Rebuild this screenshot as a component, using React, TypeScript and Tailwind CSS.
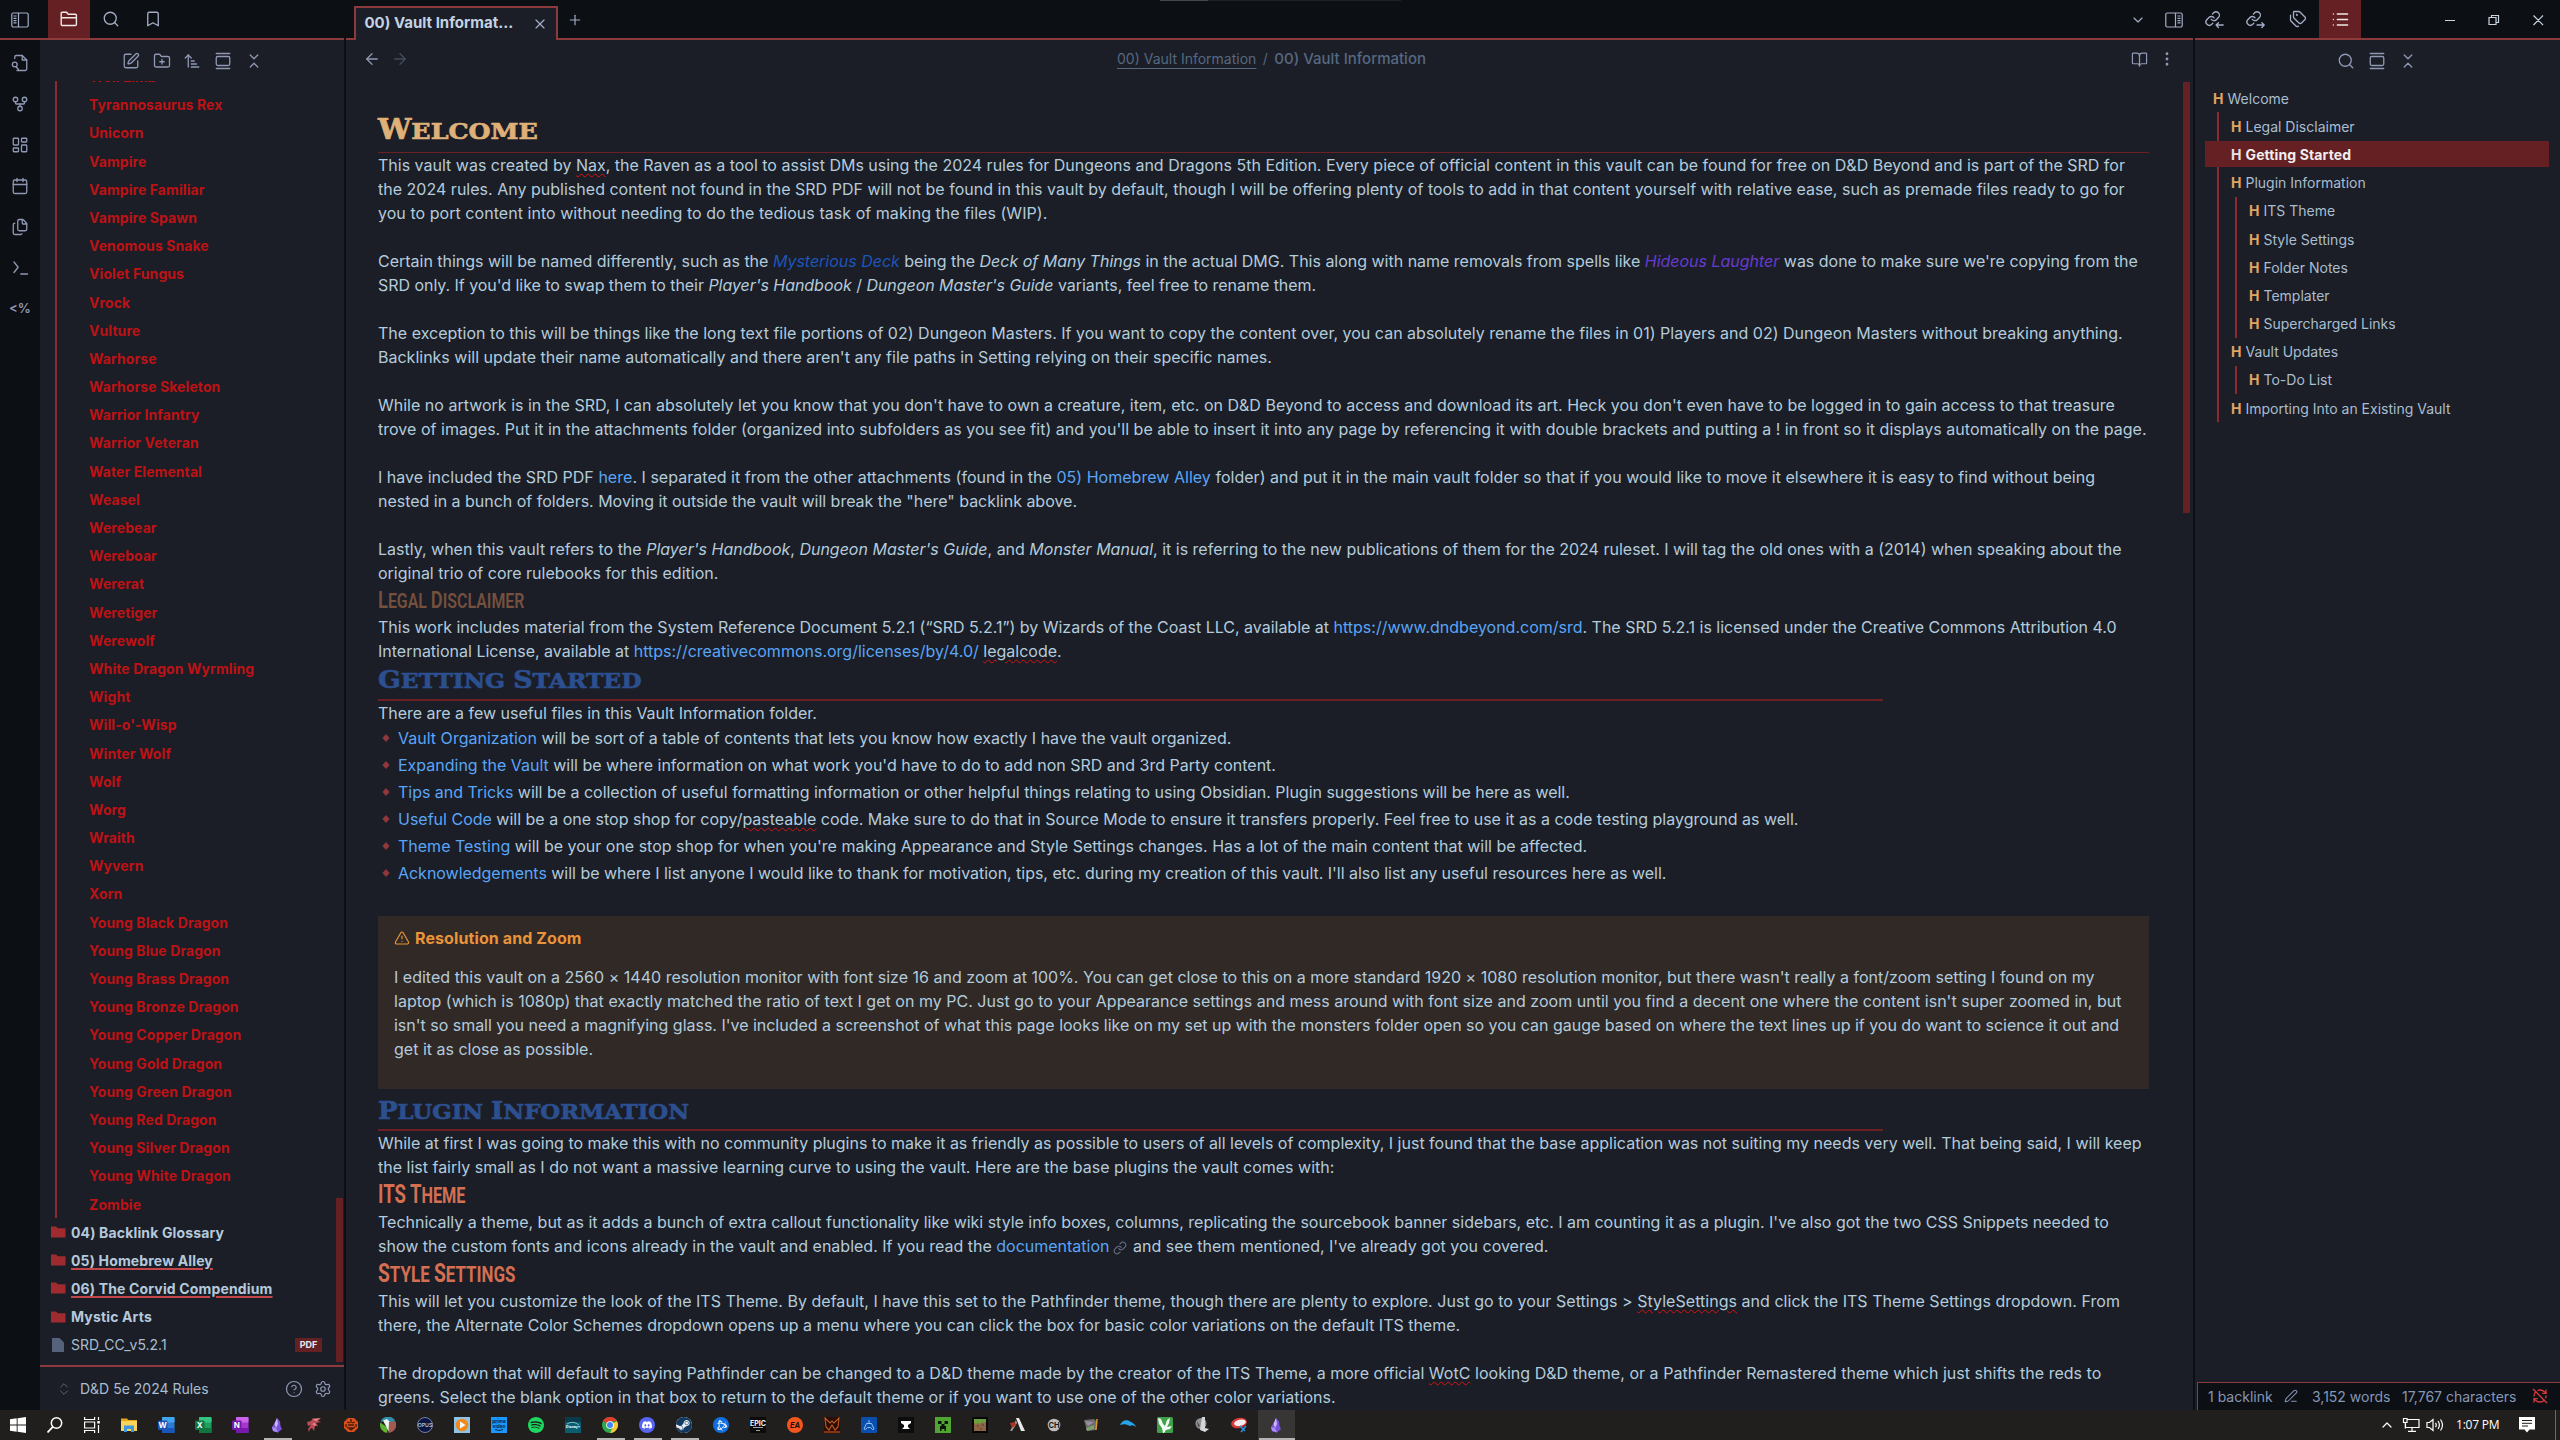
import React from "react";
import {
  ArrowLeft, ArrowRight, ArrowUpNarrowWide, Bookmark, BookOpen, Calendar, ChevronDown, ChevronUp,
  ChevronsDownUp, ChevronsUpDown, CircleHelp, EllipsisVertical, Files, FolderPlus, GalleryVertical,
  GitFork, LayoutDashboard, Link, List, PenLine, Plus, RefreshCwOff, Search, Settings, SquarePen,
  Tags, TriangleAlert, X,
} from "lucide-react";
import { SiBattledotnet, SiDiscord, SiEa, SiEpicgames, SiSpotify, SiSteam } from "react-icons/si";

const SW = 1.75;

const monsters = [
  "Troll Limb", "Tyrannosaurus Rex", "Unicorn", "Vampire", "Vampire Familiar", "Vampire Spawn",
  "Venomous Snake", "Violet Fungus", "Vrock", "Vulture", "Warhorse", "Warhorse Skeleton",
  "Warrior Infantry", "Warrior Veteran", "Water Elemental", "Weasel", "Werebear", "Wereboar",
  "Wererat", "Weretiger", "Werewolf", "White Dragon Wyrmling", "Wight", "Will-o'-Wisp",
  "Winter Wolf", "Wolf", "Worg", "Wraith", "Wyvern", "Xorn", "Young Black Dragon",
  "Young Blue Dragon", "Young Brass Dragon", "Young Bronze Dragon", "Young Copper Dragon",
  "Young Gold Dragon", "Young Green Dragon", "Young Red Dragon", "Young Silver Dragon",
  "Young White Dragon", "Zombie",
];

const folders = [
  { name: "04) Backlink Glossary", underline: false },
  { name: "05) Homebrew Alley", underline: true },
  { name: "06) The Corvid Compendium", underline: true },
  { name: "Mystic Arts", underline: false },
];

/* ---------- small drawings ---------- */

function PanelIcon({ right = false }: { right?: boolean }) {
  return (
    <svg width="18" height="16" viewBox="0 0 18 16" fill="none" stroke="currentColor" strokeWidth="1.2" className={right ? "-scale-x-100" : ""}>
      <rect x="0.8" y="1" width="16.4" height="14" rx="1.5" />
      <path d="M7.5 1v14M2.5 4h3M2.5 6.3h3M2.5 8.6h3M2.5 10.9h3" />
    </svg>
  );
}

function FolderTabIcon() {
  return (
    <svg width="18" height="16" viewBox="0 0 18 16" fill="none" stroke="currentColor" strokeWidth="1.4" strokeLinejoin="round">
      <path d="M2 1.2h4.6l1.6 2h7.2a1 1 0 0 1 1 1v9.1a1.2 1.2 0 0 1-1.2 1.2H2.4a1.2 1.2 0 0 1-1.2-1.2V2a.8.8 0 0 1 .8-.8zM1.2 6.8h15.2" />
    </svg>
  );
}

function FileSearchIcon() {
  return (
    <svg width="18" height="18" viewBox="0 0 24 24" fill="none" stroke="currentColor" strokeWidth={SW} strokeLinecap="round" strokeLinejoin="round">
      <path d="M5 6V4a2 2 0 0 1 2-2h8l6 6v12a2 2 0 0 1-2 2H8" />
      <path d="M15 2v6h6" />
      <circle cx="5" cy="14" r="3.2" />
      <path d="M7 17l3 4" />
    </svg>
  );
}

function TerminalIcon() {
  return (
    <svg width="18" height="18" viewBox="0 0 24 24" fill="none" stroke="currentColor" strokeWidth={SW} strokeLinecap="round" strokeLinejoin="round">
      <path d="M4 4l5.5 7L4 18M13 20h9" />
    </svg>
  );
}

function LinkArrowIcon({ out = false }: { out?: boolean }) {
  return (
    <svg width="19" height="19" viewBox="0 0 24 24" fill="none" stroke="currentColor" strokeWidth="1.7" strokeLinecap="round" strokeLinejoin="round">
      <path d="M8 11.8a4.2 4.2 0 0 0 6.3.4l2.6-2.6a4.2 4.2 0 0 0-6-6L9.5 5" />
      <path d="M11.4 9.9a4.2 4.2 0 0 0-6.4-.4l-2.500 2.600a4.200 4.200 0 0 0 6 6l1.400-1.500" />
      <path d={out ? "M14 19h9M20 16l3 3-3 3" : "M23 19h-9M17 16l-3 3 3 3"} />
    </svg>
  );
}

function FolderGlyph() {
  return (
    <svg width="15" height="12" viewBox="0 0 15 12" fill="#a02b2f">
      <path d="M0 .6h5.200l1.500 1.600H14.500V11.500H0z" />
    </svg>
  );
}

function Diamond() {
  return (
    <svg width="8" height="8" viewBox="0 0 8 8" fill="#91373b">
      <path d="M4 0L7.600 4 4 8 .4 4z" />
    </svg>
  );
}

/* ---------- text helpers ---------- */

const L = ({ children, t = "" }: { children?: React.ReactNode; t?: string }) => (
  <div className={`h-6 leading-6 whitespace-pre ${t}`}>{children}</div>
);
const A = ({ children }: { children: React.ReactNode }) => <span className="text-[#5aa5f6]">{children}</span>;
const I = ({ children }: { children: React.ReactNode }) => <i className="italic">{children}</i>;
const Misspelt = ({ children }: { children: React.ReactNode }) => (
  <span className="underline decoration-[#d51414] decoration-wavy decoration-[1.300px] underline-offset-2">{children}</span>
);

function Caps({ text, big }: { text: string; big: string }) {
  return (
    <>
      {text.split(" ").map((word, i) => {
        const caps = word === word.toUpperCase() ? word.length : 1;
        return (
          <React.Fragment key={i}>
            {i > 0 && " "}
            <span className={big}>{word.slice(0, caps)}</span>
            {word.slice(caps).toUpperCase()}
          </React.Fragment>
        );
      })}
    </>
  );
}

function H2({ text, scale }: { text: string; scale: string }) {
  return (
    <div className="h-[37.5px] w-[1505px] border-b-2 border-[#6b2124]">
      <div className={`w-max origin-left font-['DejaVu_Serif'] text-[21px] leading-[33px] font-bold text-[#2c4f8f] [-webkit-text-stroke:0.700px_#2c4f8f] ${scale}`}>
        <Caps text={text} big="text-[24px]" />
      </div>
    </div>
  );
}

function H3({ text, scale }: { text: string; scale: string }) {
  return (
    <div className="h-[31px]">
      <div className={`w-max origin-left font-['Roboto'] text-[22px] leading-[31px] font-bold text-[#d46f52] ${scale}`}>
        <Caps text={text} big="text-[25px]" />
      </div>
    </div>
  );
}

/* ---------- panes ---------- */

function Ribbon() {
  const cell = "flex h-[41px] items-center justify-center";
  return (
    <div className="flex w-10 shrink-0 flex-col bg-[#0c0f14] pt-[2.500px] text-[#8f99b4]">
      <div className={cell}><FileSearchIcon /></div>
      <div className={cell}><GitFork size={18} strokeWidth={SW} className="rotate-0" /></div>
      <div className={cell}><LayoutDashboard size={18} strokeWidth={SW} /></div>
      <div className={cell}><Calendar size={18} strokeWidth={SW} /></div>
      <div className={cell}><Files size={18} strokeWidth={SW} /></div>
      <div className={cell}><TerminalIcon /></div>
      <div className={`${cell} text-[13px] font-semibold`}>&lt;%</div>
    </div>
  );
}

function Explorer() {
  return (
    <div className="flex w-[304px] shrink-0 flex-col bg-[#1b1e26]">
      <div className="flex h-[41px] shrink-0 items-center gap-[12.500px] pl-[82px] text-[#8f99b4]">
        <SquarePen size={18} strokeWidth={SW} />
        <FolderPlus size={18} strokeWidth={SW} />
        <ArrowUpNarrowWide size={18} strokeWidth={SW} />
        <GalleryVertical size={18} strokeWidth={SW} />
        <ChevronsDownUp size={18} strokeWidth={SW} className="ml-px" />
      </div>
      <div className="flex h-[1284px] shrink-0 overflow-hidden">
        <div className="w-[296px] shrink-0">
          <div className="ml-[15px] h-[1137px] overflow-hidden border-l-2 border-[#8c2a30]">
            <div className="-mt-[18px] pl-[32px]">
              {monsters.map((m) => (
                <div key={m} className="h-[28.200px] text-[14px] leading-[28.200px] font-bold tracking-[0.080px] whitespace-nowrap text-[#bd1215]">{m}</div>
              ))}
            </div>
          </div>
          {folders.map((f) => (
            <div key={f.name} className="flex h-[28.200px] items-center pl-[11px] text-[14px] font-bold tracking-[0.150px] text-[#b4c9dc]">
              <FolderGlyph />
              <span className={f.underline ? "ml-[5px] underline decoration-[#c2464a] decoration-2 underline-offset-2" : "ml-[5px]"}>{f.name}</span>
            </div>
          ))}
          <div className="flex h-[28.200px] items-center pl-[12px] text-[14px] text-[#a9bdd0]">
            <svg width="12" height="14" viewBox="0 0 12 14" fill="#56627a"><path d="M0 0h7.500L12 4.500V14H0z" /></svg>
            <span className="ml-[7px]">SRD_CC_v5.2.1</span>
            <span className="mr-[14px] ml-auto flex h-[14px] w-[27px] items-center justify-center bg-[#652023] text-[9px] font-bold text-[#e4e8ee]">PDF</span>
          </div>
        </div>
        <div className="mt-[1117px] h-[164px] w-[7px] bg-[#652023]" />
      </div>
      <div className="flex flex-1 items-center border-t-2 border-[#8d3a3c] pl-[16px] text-[14px] text-[#a9bdd0]">
        <ChevronsUpDown size={16} strokeWidth={1.5} className="text-[#5b6579]" />
        <span className="ml-2">D&amp;D 5e 2024 Rules</span>
        <CircleHelp size={18} strokeWidth={1.6} className="mr-[11px] ml-auto text-[#8f99b4]" />
        <Settings size={18} strokeWidth={1.6} className="mr-[12px] text-[#8f99b4]" />
      </div>
    </div>
  );
}

const bullets: { name: string; rest: React.ReactNode; t?: string }[] = [
  { name: "Vault Organization", rest: " will be sort of a table of contents that lets you know how exactly I have the vault organized.", t: "tracking-[0.018px]" },
  { name: "Expanding the Vault", rest: " will be where information on what work you'd have to do to add non SRD and 3rd Party content." },
  { name: "Tips and Tricks", rest: " will be a collection of useful formatting information or other helpful things relating to using Obsidian. Plugin suggestions will be here as well.", t: "tracking-[-0.020px]" },
  { name: "Useful Code", rest: <> will be a one stop shop for copy/<Misspelt>pasteable</Misspelt> code. Make sure to do that in Source Mode to ensure it transfers properly. Feel free to use it as a code testing playground as well.</> },
  { name: "Theme Testing", rest: " will be your one stop shop for when you're making Appearance and Style Settings changes. Has a lot of the main content that will be affected." },
  { name: "Acknowledgements", rest: " will be where I list anyone I would like to thank for motivation, tips, etc. during my creation of this vault. I'll also list any useful resources here as well.", t: "tracking-[-0.028px]" },
];

function Note() {
  return (
    <div className="flex w-[1847px] shrink-0 flex-col bg-[#1b1e26]">
      <div className="flex h-[42px] shrink-0 items-center pb-[4px] pl-[17px] text-[#8f99b4]">
        <ArrowLeft size={18} strokeWidth={SW} />
        <ArrowRight size={18} strokeWidth={SW} className="ml-[10px] text-[#454c5b]" />
        <div className="ml-[708px] flex w-[309px] items-baseline justify-between whitespace-nowrap text-[#566880]">
          <span className="text-[14px] underline underline-offset-4">00) Vault Information</span>
          <span className="text-[14px]">/</span>
          <span className="text-[15px] font-medium">00) Vault Information</span>
        </div>
        <BookOpen size={17} strokeWidth={SW} className="ml-[705px]" />
        <EllipsisVertical size={18} strokeWidth={SW} className="ml-[10px]" />
      </div>
      <div className="flex h-[1328px] overflow-hidden">
        <div className="ml-8 w-[1771px] shrink-0 text-[16px] text-[#b4cbdc]">
          <div className="mt-[31px] h-[40px] border-b border-[#6b2124]">
            <div className="w-max origin-left scale-x-[1.100] font-['DejaVu_Serif'] text-[23px] leading-[34px] font-bold text-[#dfb078] [-webkit-text-stroke:0.700px_#dfb078]">
              <Caps text="Welcome" big="text-[27px]" />
            </div>
          </div>
          <L>This vault was created by <Misspelt>Nax</Misspelt>, the Raven as a tool to assist DMs using the 2024 rules for Dungeons and Dragons 5th Edition. Every piece of official content in this vault can be found for free on D&amp;D Beyond and is part of the SRD for</L>
          <L t="tracking-[0.014px]">the 2024 rules. Any published content not found in the SRD PDF will not be found in this vault by default, though I will be offering plenty of tools to add in that content yourself with relative ease, such as premade files ready to go for</L>
          <L t="tracking-[0.045px]">you to port content into without needing to do the tedious task of making the files (WIP).</L>
          <L />
          <L t="tracking-[-0.011px]">Certain things will be named differently, such as the <i className="text-[#1d55b8]">Mysterious Deck</i> being the <I>Deck of Many Things</I> in the actual DMG. This along with name removals from spells like <i className="text-[#663bd0]">Hideous Laughter</i> was done to make sure we're copying from the</L>
          <L t="tracking-[-0.045px]">SRD only. If you'd like to swap them to their <I>Player's Handbook</I> / <I>Dungeon Master's Guide</I> variants, feel free to rename them.</L>
          <L />
          <L t="tracking-[0.011px]">The exception to this will be things like the long text file portions of 02) Dungeon Masters. If you want to copy the content over, you can absolutely rename the files in 01) Players and 02) Dungeon Masters without breaking anything.</L>
          <L>Backlinks will update their name automatically and there aren't any file paths in Setting relying on their specific names.</L>
          <L />
          <L t="tracking-[0.007px]">While no artwork is in the SRD, I can absolutely let you know that you don't have to own a creature, item, etc. on D&amp;D Beyond to access and download its art. Heck you don't even have to be logged in to gain access to that treasure</L>
          <L t="tracking-[0.024px]">trove of images. Put it in the attachments folder (organized into subfolders as you see fit) and you'll be able to insert it into any page by referencing it with double brackets and putting a ! in front so it displays automatically on the page.</L>
          <L />
          <L t="tracking-[0.028px]">I have included the SRD PDF <A>here</A>. I separated it from the other attachments (found in the <A>05) Homebrew Alley</A> folder) and put it in the main vault folder so that if you would like to move it elsewhere it is easy to find without being</L>
          <L t="tracking-[-0.017px]">nested in a bunch of folders. Moving it outside the vault will break the "here" backlink above.</L>
          <L />
          <L>Lastly, when this vault refers to the <I>Player's Handbook</I>, <I>Dungeon Master's Guide</I>, and <I>Monster Manual</I>, it is referring to the new publications of them for the 2024 ruleset. I will tag the old ones with a (2014) when speaking about the</L>
          <L>original trio of core rulebooks for this edition.</L>
          <div className="h-[30px]">
            <div className="w-max origin-left scale-x-[0.795] font-['Roboto'] text-[20px] leading-[32px] font-semibold text-[#74503f]">
              <Caps text="Legal Disclaimer" big="text-[23px]" />
            </div>
          </div>
          <L t="tracking-[-0.008px]">This work includes material from the System Reference Document 5.2.1 (“SRD 5.2.1”) by Wizards of the Coast LLC, available at <A>https://www.dndbeyond.com/srd</A>. The SRD 5.2.1 is licensed under the Creative Commons Attribution 4.0</L>
          <L>International License, available at <A>https://creativecommons.org/licenses/by/4.0/</A> <Misspelt>legalcode</Misspelt>.</L>
          <H2 text="Getting Started" scale="scale-x-[1.115]" />
          <L t="tracking-[-0.020px]">There are a few useful files in this Vault Information folder.</L>
          {bullets.map(({ name, rest, t }) => (
            <div key={name} className={`flex h-[27px] items-center whitespace-pre ${t ?? ""}`}>
              <span className="mr-2 ml-1"><Diamond /></span>
              <span><A>{name}</A>{rest}</span>
            </div>
          ))}
          <div className="mt-[29px] h-[173px] bg-[#302926] px-4 pt-[10px]">
            <div className="flex h-6 items-center font-bold text-[#eb9339]">
              <TriangleAlert size={16} strokeWidth={1.75} />
              <span className="ml-[5px] tracking-[0.100px]">Resolution and Zoom</span>
            </div>
            <div className="pt-[15.500px]">
              <L t="tracking-[0.014px]">I edited this vault on a 2560 × 1440 resolution monitor with font size 16 and zoom at 100%. You can get close to this on a more standard 1920 × 1080 resolution monitor, but there wasn't really a font/zoom setting I found on my</L>
              <L t="tracking-[0.021px]">laptop (which is 1080p) that exactly matched the ratio of text I get on my PC. Just go to your Appearance settings and mess around with font size and zoom until you find a decent one where the content isn't super zoomed in, but</L>
              <L t="tracking-[-0.014px]">isn't so small you need a magnifying glass. I've included a screenshot of what this page looks like on my set up with the monsters folder open so you can gauge based on where the text lines up if you do want to science it out and</L>
              <L>get it as close as possible.</L>
            </div>
          </div>
          <div className="pt-[5px]"><H2 text="Plugin Information" scale="scale-x-[1.085]" /></div>
          <L>While at first I was going to make this with no community plugins to make it as friendly as possible to users of all levels of complexity, I just found that the base application was not suiting my needs very well. That being said, I will keep</L>
          <L>the list fairly small as I do not want a massive learning curve to using the vault. Here are the base plugins the vault comes with:</L>
          <H3 text="ITS Theme" scale="scale-x-[0.740]" />
          <L t="tracking-[-0.014px]">Technically a theme, but as it adds a bunch of extra callout functionality like wiki style info boxes, columns, replicating the sourcebook banner sidebars, etc. I am counting it as a plugin. I've also got the two CSS Snippets needed to</L>
          <L>show the custom fonts and icons already in the vault and enabled. If you read the <A>documentation</A><Link size={14} strokeWidth={1.75} className="mr-[2px] ml-[3px] inline text-[#6b7489]" /> and see them mentioned, I've already got you covered.</L>
          <H3 text="Style Settings" scale="scale-x-[0.770]" />
          <L t="tracking-[0.036px]">This will let you customize the look of the ITS Theme. By default, I have this set to the Pathfinder theme, though there are plenty to explore. Just go to your Settings &gt; <Misspelt>StyleSettings</Misspelt> and click the ITS Theme Settings dropdown. From</L>
          <L t="tracking-[-0.012px]">there, the Alternate Color Schemes dropdown opens up a menu where you can click the box for basic color variations on the default ITS theme.</L>
          <L />
          <L t="tracking-[0.029px]">The dropdown that will default to saying Pathfinder can be changed to a D&amp;D theme made by the creator of the ITS Theme, a more official <Misspelt>WotC</Misspelt> looking D&amp;D theme, or a Pathfinder Remastered theme which just shifts the reds to</L>
          <L t="tracking-[0.031px]">greens. Select the blank option in that box to return to the default theme or if you want to use one of the other color variations.</L>
        </div>
        <div className="ml-[34px] h-[431px] w-[7px] bg-[#652023]" />
      </div>
    </div>
  );
}

function Heading({ children, active = false }: { children: string; active?: boolean }) {
  return (
    <div className="flex h-[28.200px] items-center text-[14px] whitespace-nowrap">
      <span className={active ? "w-[14.500px] font-bold text-[#e9e4e4]" : "w-[14.500px] font-bold text-[#e0a562]"}>H</span>
      <span className={active ? "font-bold tracking-[0.120px] text-[#f0eeee]" : "text-[#a9bdd0]"}>{children}</span>
    </div>
  );
}

function Outline() {
  return (
    <div className="flex flex-1 flex-col bg-[#1b1e26]">
      <div className="flex h-[44px] shrink-0 items-center gap-[13px] pb-[3px] pl-[141.500px] text-[#8f99b4]">
        <Search size={18} strokeWidth={SW} />
        <GalleryVertical size={18} strokeWidth={SW} />
        <ChevronsDownUp size={18} strokeWidth={SW} />
      </div>
      <div className="px-[11px]">
        <div className="pl-[7px]"><Heading>Welcome</Heading></div>
        <div className="ml-[11px] border-l-2 border-[#8c2a30]">
          <div className="pl-[12px]"><Heading>Legal Disclaimer</Heading></div>
          <div className="-ml-[14px] flex h-[28.200px] items-center">
            <div className="flex h-[26px] flex-1 items-center bg-[#652023] pl-[26px]"><Heading active>Getting Started</Heading></div>
          </div>
          <div className="pl-[12px]">
            <Heading>Plugin Information</Heading>
            <div className="ml-[4px] border-l-2 border-[#8c2a30] pl-[12px]">
              {["ITS Theme", "Style Settings", "Folder Notes", "Templater", "Supercharged Links"].map((t) => <Heading key={t}>{t}</Heading>)}
            </div>
            <Heading>Vault Updates</Heading>
            <div className="ml-[4px] border-l-2 border-[#8c2a30] pl-[12px]"><Heading>To-Do List</Heading></div>
            <Heading>Importing Into an Existing Vault</Heading>
          </div>
        </div>
      </div>
      <div className="mt-auto ml-[2px] flex h-[28px] items-center border-t border-l border-[#8d3a3c] bg-[#0c0f14] pb-px pl-[10px] text-[14px] whitespace-nowrap text-[#8696b4]">
        <span className="w-[76px]">1 backlink</span>
        <PenLine size={14} strokeWidth={SW} />
        <span className="ml-[14px] w-[90px]">3,152 words</span>
        <span className="w-[130px]">17,767 characters</span>
        <RefreshCwOff size={16} strokeWidth={2} className="text-[#d83a3e]" />
      </div>
    </div>
  );
}

/* ---------- top bar ---------- */

function TopBar() {
  return (
    <div className="relative flex h-10 shrink-0 bg-[#0c0f14] text-[#a3aec6]">
      <div className="absolute top-0 left-[1160px] h-px w-[241px] bg-[#1f2226]"><div className="h-px w-12 bg-[#43474c]" /></div>
      <div className="flex w-[344px] border-b-2 border-[#8d3a3c]">
        <div className="flex w-12 items-center justify-center pr-[8px] pt-[2px]"><PanelIcon /></div>
        <div className="flex w-[42px] items-center justify-center bg-[#652023] text-[#f1e9e9]"><FolderTabIcon /></div>
        <div className="flex w-[42px] items-center justify-center"><Search size={18} strokeWidth={SW} /></div>
        <div className="flex w-[42px] items-center justify-center"><Bookmark size={18} strokeWidth={SW} /></div>
      </div>
      <div className="w-[2px]" />
      <div className="flex w-[1847px]">
        <div className="w-2 border-b-2 border-[#8d3a3c]" />
        <div className="mt-[6px] flex w-[204px] items-center border-2 border-b-0 border-[#8d3a3c] bg-[#1b1e26] pb-px pl-[8.500px]">
          <span className="text-[15px] font-bold whitespace-nowrap text-[#c3d2e4]">00) Vault Informat...</span>
          <X size={16} strokeWidth={SW} className="mr-[8px] ml-auto" />
        </div>
        <div className="flex flex-1 items-center border-b-2 border-[#8d3a3c] pt-[2px] pl-[8.500px]">
          <Plus size={16} strokeWidth={SW} />
          <ChevronDown size={16} strokeWidth={SW} className="ml-auto" />
          <span className="mr-[10px] ml-[19px]"><PanelIcon right /></span>
        </div>
      </div>
      <div className="w-[2px]" />
      <div className="flex flex-1 items-center border-b-2 border-[#8d3a3c]">
        <div className="flex w-[40px] justify-center pr-[2px]"><LinkArrowIcon /></div>
        <div className="flex w-[42px] justify-center pr-[2px]"><LinkArrowIcon out /></div>
        <div className="flex w-[42px] justify-center"><Tags size={18} strokeWidth={SW} /></div>
        <div className="flex h-full w-[42px] items-center justify-center bg-[#652023] text-[#f1e9e9]"><List size={19} strokeWidth={SW} /></div>
        <svg width="199" height="38" viewBox="0 0 199 38" fill="none" stroke="#c9d3e2" strokeWidth="1.200">
          <path d="M84 20.500h10M128 17.500h7v7h-7zM130.500 17.500v-2h7v7h-2.500M172.500 15.500l9.500 9.500M182 15.500l-9.500 9.500" />
        </svg>
      </div>
    </div>
  );
}

/* ---------- taskbar ---------- */

function OfficeTile({ letter, dark, mid, light }: { letter: string; dark: string; mid: string; light: string }) {
  return (
    <svg width="17" height="16" viewBox="0 0 17 16">
      <rect x="4" y="0" width="12.500" height="16" rx="1" fill={mid} />
      <rect x="4" y="0" width="12.500" height="5.500" rx="1" fill={light} />
      <rect x="4" y="11" width="12.500" height="5" fill={dark} />
      <rect x="0" y="3.500" width="9.500" height="9.500" rx="1" fill={dark} />
      <text x="4.750" y="11" fontSize="8" fontWeight="700" fontFamily="Inter" textAnchor="middle" fill="#fff">{letter}</text>
    </svg>
  );
}

function Gem() {
  return (
    <svg width="12" height="16" viewBox="0 0 12 16">
      <path d="M6 1l3 3.500 .5 4.500L11 12l-4 3.500-5-1.500-1-4 2-3z" fill="#7a52d8" />
      <path d="M6 1L3.500 7 5 11l2-4z" fill="#c9b6fa" />
      <path d="M1 10l4 1 2 4.500-5-1.500z" fill="#a98bf4" />
    </svg>
  );
}

const S = ({ children }: { children: React.ReactNode }) => <svg width="16" height="16" viewBox="0 0 16 16">{children}</svg>;

const Round = ({ bg, children }: { bg: string; children: React.ReactNode }) => (
  <span className={`flex size-4 items-center justify-center rounded-full ${bg}`}>{children}</span>
);

const apps: { icon: React.ReactNode; open?: boolean; active?: boolean }[] = [
  { icon: <S><path d="M0 2.200L6.700 1.300V7.500H0zM7.600 1.200L16 0V7.500H7.600zM0 8.500h6.700v6.200L0 13.800zM7.600 8.500H16V16l-8.400-1.200z" fill="#fff" /></S> },
  { icon: <S><circle cx="9.500" cy="6" r="5.200" fill="none" stroke="#fff" strokeWidth="1.500" /><path d="M5.800 9.800L.5 15.500" stroke="#fff" strokeWidth="1.700" /></S> },
  { icon: <S><path d="M.6 0v2.500h10V0M.6 16v-2.500h10V16M.6 5h10v6H.6zM14.500 0v3M14.500 8v8" fill="none" stroke="#fff" strokeWidth="1.200" /><rect x="13.300" y="4" width="2.500" height="2.500" fill="#fff" /></S> },
  { icon: <S><path d="M0 1.500h6l1.500 1.500H16V14H0z" fill="#e6a817" /><path d="M0 4h16v10H0z" fill="#fbd35b" /><path d="M3 15V8.500h10V15h-3v-3H6v3z" fill="#3d98e0" /></S> },
  { icon: <OfficeTile letter="W" dark="#1a56b8" mid="#2b7cd3" light="#41a5ee" /> },
  { icon: <OfficeTile letter="X" dark="#10753f" mid="#1f9e5f" light="#33c481" /> },
  { icon: <OfficeTile letter="N" dark="#7719aa" mid="#a636d0" light="#ca64ea" /> },
  { icon: <Gem />, open: true },
  { icon: <S><path d="M1 5l4-1 2-3 3 1 5-1-3 3 3 1-5 1 2 3-3 0-1 5-2-3-2 1-1 3-1-3 3-4-3 1z" fill="#b94c56" /><path d="M7 2l7-1-4 3zM6 7l3-1 1 3z" fill="#e79398" /></S> },
  { icon: <S><path d="M5 1h6l4 4v6l-4 4H5l-4-4V5z" fill="#d9501a" /><path d="M4 5l3 1M12 5L9 6M5 8h6M4 10l4 3 4-3M8 2v4M3 7v3M13 7v3M6 11h4" stroke="#4a1a08" strokeWidth="1.300" fill="none" /></S> },
  { icon: <S><path d="M.5 5a8 8 0 0 1 15-.5L9 5.500 6 3.500z" fill="#2f8fa8" /><path d="M.4 5.500A8 8 0 0 0 7 15.900L8 11z" fill="#5cb531" /><path d="M3 3.500l4-1.500 3 3-1 10z" fill="#eef3ee" /><path d="M9 5l6.500-.5A8 8 0 0 1 8.500 15.900z" fill="#a35a50" /></S> },
  { icon: <S><circle cx="8" cy="8" r="7.500" fill="#0c1642" stroke="#8b98c8" strokeWidth=".8" /><text x="8" y="10" fontSize="5.200" fontFamily="Inter" textAnchor="middle" fill="#e6e9f5">OPUS</text></S> },
  { icon: <S><rect width="16" height="16" fill="#8fc4e8" /><circle cx="8" cy="8" r="6.300" fill="#f08a1c" /><path d="M6 4.500L11.500 8 6 11.500z" fill="#fff" /></S> },
  { icon: <S><rect width="16" height="16" fill="#1a98ff" /><text x="8" y="6" fontSize="4.800" fontWeight="700" fontFamily="Inter" textAnchor="middle" fill="#0b2545">prime</text><text x="8" y="11" fontSize="4.800" fontWeight="700" fontFamily="Inter" textAnchor="middle" fill="#0b2545">video</text><path d="M4 12.500q4 2 8 0" stroke="#0b2545" fill="none" /></S> },
  { icon: <SiSpotify size={16} color="#1ed760" /> },
  { icon: <S><rect width="16" height="16" fill="#0c5c70" /><rect width="16" height="5" fill="#0a3b4d" /><path d="M2 7q6-4 12 1" stroke="#a7e6ee" strokeWidth=".7" fill="none" /><text x="8" y="10.800" fontSize="3.600" fontWeight="700" fontFamily="Inter" textAnchor="middle" fill="#e8fbff">Disney+</text></S> },
  { icon: <S><circle cx="8" cy="8" r="8" fill="#2ca94f" /><path d="M8 8L1.100 4A8 8 0 0 1 15 4.200H8z" fill="#e33b2e" /><path d="M8 8l7-3.800A8 8 0 0 1 8 16l3-6z" fill="#fcc934" /><circle cx="8" cy="8" r="3.800" fill="#fff" /><circle cx="8" cy="8" r="3" fill="#4285f4" /></S>, open: true },
  { icon: <Round bg="bg-[#5865f2]"><SiDiscord size={10} color="#fff" /></Round>, open: true },
  { icon: <Round bg="bg-[#e9eef3]"><SiSteam size={16} color="#12395f" /></Round>, open: true },
  { icon: <Round bg="bg-[#0f6fe0]"><SiBattledotnet size={11} color="#fff" /></Round> },
  { icon: <S><rect width="16" height="16" fill="#0b0b0b" /><text x="8" y="8.500" fontSize="7" fontWeight="700" fontFamily="Inter" textAnchor="middle" fill="#f4f4f4">EPIC</text><path d="M3 10.500h10M6 13.500h4" stroke="#a5a5a5" strokeWidth="1.200" /></S> },
  { icon: <S><circle cx="8" cy="8" r="8" fill="#f4561e" /><text x="8" y="10.800" fontSize="7.500" fontWeight="700" fontStyle="italic" fontFamily="Inter" textAnchor="middle" fill="#1a0f0c">EA</text></S> },
  { icon: <S><rect width="16" height="16" fill="#2a0e06" /><path d="M1 1l5 5 2-2 2 2 5-5-1 9-3 3-3-5-3 5-3-3z" fill="none" stroke="#c25a20" strokeWidth="1.100" /><path d="M0 15h16" stroke="#e8581c" /></S> },
  { icon: <S><rect width="16" height="16" rx="1.500" fill="#0b4fae" /><path d="M8 3v3M5.500 6.500h5L13 12l-1.500.5-2-2h-3l-2 2L3 12z" fill="none" stroke="#8fc2f7" strokeWidth="1" /></S> },
  { icon: <S><rect width="16" height="16" fill="#0c0c0c" /><path d="M3 4h10v2l-3 2v2l2 2H4l2-2V8L3 6z" fill="#fff" /></S> },
  { icon: <S><rect width="16" height="16" fill="#51a532" /><path d="M3 4h3.500v3H3zM9.500 4H13v3H9.500zM6.500 7h3v2H11v5H9.500v-2h-3v2H5V9h1.500z" fill="#0d150a" /></S> },
  { icon: <S><rect width="16" height="16" fill="#060606" /><rect x="2" y="2" width="12" height="12" fill="#8e6446" /><path d="M2 2h12v3l-2 1-2-1-2 2-2-1-2 1-2-1z" fill="#67a03d" /><path d="M5 9h2M10 8h2M8 12h2" stroke="#5d3d28" /></S> },
  { icon: <S><path d="M7 1h3l6 13h-4z" fill="#e8e8e8" /><path d="M7 3l1 3-5 8H1z" fill="#9c9c9c" /><path d="M1 6l5-1 1 3-4 3z" fill="#b03322" /></S> },
  { icon: <S><circle cx="8" cy="8" r="6.300" fill="#bdbdbd" /><text x="8" y="10.800" fontSize="7.500" fontWeight="700" fontFamily="Inter" textAnchor="middle" fill="#1c1c1c">CH</text></S> },
  { icon: <S><path d="M1 3l10-1 2 2v9l-9 1z" fill="#6b6b6b" /><path d="M3 11l8-3v4l-7 2z" fill="#7da36b" /><path d="M2 4l9 1-6 4z" fill="#9a8fa5" /><path d="M14 2l-1 11" stroke="#d89b35" strokeWidth="1.500" /></S> },
  { icon: <S><path d="M0 8c2-5 7-6 11-3 3 1 4 3 5 5-3-2-4-2-6-1-4-2-6-2-10-1z" fill="#26a5ec" /></S> },
  { icon: <S><rect width="16" height="16" rx="1.500" fill="#3fa04a" /><path d="M1 1l3 1 2 5 2 2 2-6 3-2-1 5-2 4 5-1-2 3-4 1-2 3H6L5 11 2 7z" fill="#f3faf3" /></S> },
  { icon: <S><circle cx="7" cy="6.500" r="5.500" fill="#8d9094" /><path d="M3 4l3 5-2 1z" fill="#4b4d50" /><path d="M8 0h3v11l4 1-4 3-5-2z" fill="#d3d5d8" /></S> },
  { icon: <S><ellipse cx="8" cy="6" rx="8" ry="5" transform="rotate(-12 8 6)" fill="#d83a3a" /><ellipse cx="9" cy="6" rx="6" ry="3" transform="rotate(-12 8 6)" fill="#f6eeee" /><path d="M9 9l5 5M15 9l-5 6" stroke="#2d8fd8" strokeWidth="1.600" /></S> },
  { icon: <Gem />, open: true, active: true },
];

function Taskbar() {
  return (
    <div className="flex h-[30px] shrink-0 items-center bg-[#211f1e]">
      {apps.map((a, i) => (
        <div key={i} className={`flex h-[30px] w-[37px] shrink-0 flex-col items-center ${a.active ? "bg-[#383635]" : ""}`}>
          <div className="flex h-[28px] items-center pt-[2px] pr-px">{a.icon}</div>
          {a.open && <div className={a.active ? "h-[2px] w-[36px] bg-[#b4b4b4]" : "h-[2px] w-[28px] bg-[#b4b4b4]"} />}
        </div>
      ))}
      <div className="ml-auto flex h-full items-center text-white">
        <ChevronUp size={16} strokeWidth={1.8} />
        <svg width="18" height="16" viewBox="0 0 18 16" fill="none" stroke="#fff" strokeWidth="1.200" className="ml-[7px]">
          <path d="M5 2.500h12v8H3.500V7M10 10.500V14M6 14.400h8M1.500 1.500h3.500v4H1.500zM3.300 5.500v6" />
        </svg>
        <svg width="18" height="16" viewBox="0 0 18 16" fill="none" stroke="#fff" strokeWidth="1.200" className="ml-[6px]">
          <path d="M1 5.500h2.500L7 2.500v11l-3.500-3H1zM9.500 5.800q1.500 2.200 0 4.400M12 4q2.800 4 0 8M14.500 2.500q4 5.500 0 11" />
        </svg>
        <span className="ml-[12px] w-[63px] font-['Open_Sans'] text-[12px] tracking-[-0.200px] whitespace-nowrap">1:07 PM</span>
        <svg width="16" height="16" viewBox="0 0 16 16"><path d="M0 0h16v12.500h-5.500L8 15.500l-2.500-3H0z" fill="#fff" /><path d="M3 3.500h10M3 6.300h10M3 9h6" stroke="#211f1e" /></svg>
        <div className="ml-[20px] h-full w-px bg-[#6b6a69]" />
        <div className="w-1" />
      </div>
    </div>
  );
}

export default function App() {
  return (
    <div className="flex h-[1440px] w-[2560px] flex-col overflow-hidden bg-[#0c0f14] font-['Inter',sans-serif]">
      <TopBar />
      <div className="flex h-[1370px] shrink-0">
        <Ribbon />
        <Explorer />
        <div className="w-[2px]" />
        <Note />
        <div className="w-[2px]" />
        <Outline />
      </div>
      <Taskbar />
    </div>
  );
}
